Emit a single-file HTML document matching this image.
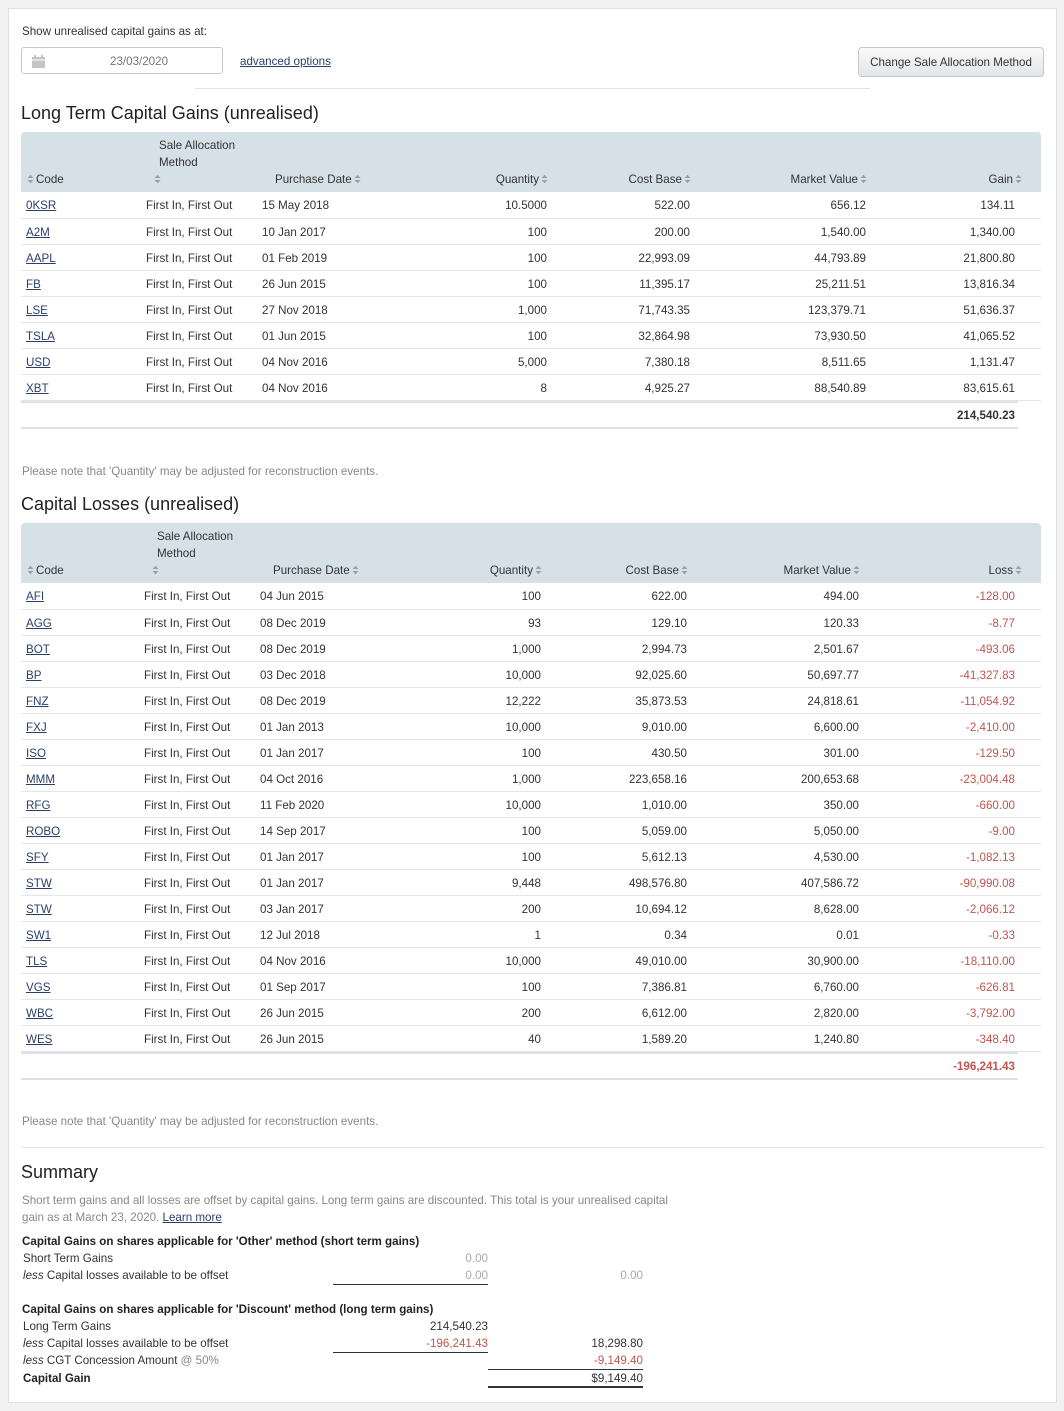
<!DOCTYPE html>
<html><head><meta charset="utf-8">
<style>
*{box-sizing:border-box;margin:0;padding:0}
body{width:1064px;height:1411px;background:#f2f2f3;font-family:"Liberation Sans",Arial,sans-serif;font-size:11.6px;color:#333;position:relative;overflow:hidden}
.panel{position:absolute;left:8px;top:8px;width:1049px;height:1395px;background:#fff;border:1px solid #e0e0e3}
.a{position:absolute;white-space:nowrap}
a{color:#2b3f6b;text-decoration:underline}
h2{font-weight:normal;font-size:18px;color:#222;position:absolute;left:21px}
.tw{position:absolute;left:21px;width:1020px}
table{border-collapse:collapse;table-layout:fixed;width:1020px}
th{background:#d6e0e7;font-weight:normal;color:#333;height:60px;vertical-align:bottom;padding:0 0 4px 0;line-height:17px;text-align:left}
th:first-child{border-top-left-radius:4px}
th:last-child{border-top-right-radius:4px}
td{height:26px;border-bottom:1px solid #e4e6ea;padding:2px 0 0 0;line-height:23px;white-space:nowrap}
.r{text-align:right}
.neg{color:#c0564e}
.s{display:inline-block;width:7px;height:10px;vertical-align:-1px;margin:0 2px}
.note{color:#888;position:absolute;left:22px}
</style></head><body>
<div class="panel"></div>
<svg width="0" height="0" style="position:absolute"><defs><symbol id="s" viewBox="0 0 7 10"><path d="M0.5 4L3.5 0.8L6.5 4Z M0.5 6L3.5 9.2L6.5 6Z" fill="#9aa0a8"/></symbol></defs></svg>

<div class="a" style="left:22px;top:25px">Show unrealised capital gains as at:</div>
<div class="a" style="left:21px;top:47px;width:202px;height:27px;border:1px solid #c9c9cc;border-radius:3px"></div>
<svg class="a" style="left:31px;top:54px" width="15" height="15" viewBox="0 0 15 15"><rect x="1" y="3" width="13" height="11" fill="#c2c4c9"/><rect x="3" y="1" width="2" height="3" fill="#c2c4c9"/><rect x="10" y="1" width="2" height="3" fill="#c2c4c9"/><rect x="1" y="5.5" width="13" height="1" fill="#fff"/></svg>
<div class="a" style="left:110px;top:55px;color:#777">23/03/2020</div>
<div class="a" style="left:240px;top:55px"><a>advanced options</a></div>
<div class="a" style="left:858px;top:47px;width:186px;height:30px;border:1px solid #c6c8cc;border-radius:4px;background:linear-gradient(#fafafa,#e4e5e8);text-align:center;line-height:29px;color:#333">Change Sale Allocation Method</div>
<div class="a" style="left:195px;top:88px;width:675px;border-top:1px solid #e2e2e5"></div>

<h2 style="top:103px">Long Term Capital Gains (unrealised)</h2>
<div class="tw" style="top:132px">
<table>
<colgroup><col style="width:120px"><col style="width:116px"><col style="width:143px"><col style="width:150px"><col style="width:143px"><col style="width:176px"><col style="width:172px"></colgroup>
<tr><th style="padding-left:4px"><svg class="s"><use href="#s"/></svg>Code</th><th style="padding-left:18px">Sale Allocation<br>Method<br><svg class="s" style="margin-left:-5px"><use href="#s"/></svg></th><th style="padding-left:18px">Purchase Date<svg class="s"><use href="#s"/></svg></th><th class="r" style="padding-right:0">Quantity<svg class="s"><use href="#s"/></svg></th><th class="r">Cost Base<svg class="s"><use href="#s"/></svg></th><th class="r">Market Value<svg class="s"><use href="#s"/></svg></th><th class="r" style="padding-right:17px">Gain<svg class="s"><use href="#s"/></svg></th></tr>
<tr><td style="padding-left:5px"><a>0KSR</a></td><td style="padding-left:5px">First In, First Out</td><td style="padding-left:5px">15 May 2018</td><td class="r" style="padding-right:3px">10.5000</td><td class="r" style="padding-right:3px">522.00</td><td class="r" style="padding-right:3px">656.12</td><td class="r" style="padding-right:26px">134.11</td></tr>
<tr><td style="padding-left:5px"><a>A2M</a></td><td style="padding-left:5px">First In, First Out</td><td style="padding-left:5px">10 Jan 2017</td><td class="r" style="padding-right:3px">100</td><td class="r" style="padding-right:3px">200.00</td><td class="r" style="padding-right:3px">1,540.00</td><td class="r" style="padding-right:26px">1,340.00</td></tr>
<tr><td style="padding-left:5px"><a>AAPL</a></td><td style="padding-left:5px">First In, First Out</td><td style="padding-left:5px">01 Feb 2019</td><td class="r" style="padding-right:3px">100</td><td class="r" style="padding-right:3px">22,993.09</td><td class="r" style="padding-right:3px">44,793.89</td><td class="r" style="padding-right:26px">21,800.80</td></tr>
<tr><td style="padding-left:5px"><a>FB</a></td><td style="padding-left:5px">First In, First Out</td><td style="padding-left:5px">26 Jun 2015</td><td class="r" style="padding-right:3px">100</td><td class="r" style="padding-right:3px">11,395.17</td><td class="r" style="padding-right:3px">25,211.51</td><td class="r" style="padding-right:26px">13,816.34</td></tr>
<tr><td style="padding-left:5px"><a>LSE</a></td><td style="padding-left:5px">First In, First Out</td><td style="padding-left:5px">27 Nov 2018</td><td class="r" style="padding-right:3px">1,000</td><td class="r" style="padding-right:3px">71,743.35</td><td class="r" style="padding-right:3px">123,379.71</td><td class="r" style="padding-right:26px">51,636.37</td></tr>
<tr><td style="padding-left:5px"><a>TSLA</a></td><td style="padding-left:5px">First In, First Out</td><td style="padding-left:5px">01 Jun 2015</td><td class="r" style="padding-right:3px">100</td><td class="r" style="padding-right:3px">32,864.98</td><td class="r" style="padding-right:3px">73,930.50</td><td class="r" style="padding-right:26px">41,065.52</td></tr>
<tr><td style="padding-left:5px"><a>USD</a></td><td style="padding-left:5px">First In, First Out</td><td style="padding-left:5px">04 Nov 2016</td><td class="r" style="padding-right:3px">5,000</td><td class="r" style="padding-right:3px">7,380.18</td><td class="r" style="padding-right:3px">8,511.65</td><td class="r" style="padding-right:26px">1,131.47</td></tr>
<tr><td style="padding-left:5px"><a>XBT</a></td><td style="padding-left:5px">First In, First Out</td><td style="padding-left:5px">04 Nov 2016</td><td class="r" style="padding-right:3px">8</td><td class="r" style="padding-right:3px">4,925.27</td><td class="r" style="padding-right:3px">88,540.89</td><td class="r" style="padding-right:26px">83,615.61</td></tr>
</table>
<div style="width:997px;border-top:2px solid #dfe1e5;border-bottom:2px solid #dfe1e5;height:28px;text-align:right;padding-right:3px;line-height:25px;font-weight:bold">214,540.23</div>
</div>
<div class="note" style="top:465px">Please note that 'Quantity' may be adjusted for reconstruction events.</div>

<h2 style="top:494px">Capital Losses (unrealised)</h2>
<div class="tw" style="top:523px">
<table>
<colgroup><col style="width:118px"><col style="width:116px"><col style="width:145px"><col style="width:144px"><col style="width:146px"><col style="width:172px"><col style="width:179px"></colgroup>
<tr><th style="padding-left:4px"><svg class="s"><use href="#s"/></svg>Code</th><th style="padding-left:18px">Sale Allocation<br>Method<br><svg class="s" style="margin-left:-5px"><use href="#s"/></svg></th><th style="padding-left:18px">Purchase Date<svg class="s"><use href="#s"/></svg></th><th class="r" style="padding-right:0">Quantity<svg class="s"><use href="#s"/></svg></th><th class="r">Cost Base<svg class="s"><use href="#s"/></svg></th><th class="r">Market Value<svg class="s"><use href="#s"/></svg></th><th class="r" style="padding-right:17px">Loss<svg class="s"><use href="#s"/></svg></th></tr>
<tr><td style="padding-left:5px"><a>AFI</a></td><td style="padding-left:5px">First In, First Out</td><td style="padding-left:5px">04 Jun 2015</td><td class="r" style="padding-right:3px">100</td><td class="r" style="padding-right:3px">622.00</td><td class="r" style="padding-right:3px">494.00</td><td class="r neg" style="padding-right:26px">-128.00</td></tr>
<tr><td style="padding-left:5px"><a>AGG</a></td><td style="padding-left:5px">First In, First Out</td><td style="padding-left:5px">08 Dec 2019</td><td class="r" style="padding-right:3px">93</td><td class="r" style="padding-right:3px">129.10</td><td class="r" style="padding-right:3px">120.33</td><td class="r neg" style="padding-right:26px">-8.77</td></tr>
<tr><td style="padding-left:5px"><a>BOT</a></td><td style="padding-left:5px">First In, First Out</td><td style="padding-left:5px">08 Dec 2019</td><td class="r" style="padding-right:3px">1,000</td><td class="r" style="padding-right:3px">2,994.73</td><td class="r" style="padding-right:3px">2,501.67</td><td class="r neg" style="padding-right:26px">-493.06</td></tr>
<tr><td style="padding-left:5px"><a>BP</a></td><td style="padding-left:5px">First In, First Out</td><td style="padding-left:5px">03 Dec 2018</td><td class="r" style="padding-right:3px">10,000</td><td class="r" style="padding-right:3px">92,025.60</td><td class="r" style="padding-right:3px">50,697.77</td><td class="r neg" style="padding-right:26px">-41,327.83</td></tr>
<tr><td style="padding-left:5px"><a>FNZ</a></td><td style="padding-left:5px">First In, First Out</td><td style="padding-left:5px">08 Dec 2019</td><td class="r" style="padding-right:3px">12,222</td><td class="r" style="padding-right:3px">35,873.53</td><td class="r" style="padding-right:3px">24,818.61</td><td class="r neg" style="padding-right:26px">-11,054.92</td></tr>
<tr><td style="padding-left:5px"><a>FXJ</a></td><td style="padding-left:5px">First In, First Out</td><td style="padding-left:5px">01 Jan 2013</td><td class="r" style="padding-right:3px">10,000</td><td class="r" style="padding-right:3px">9,010.00</td><td class="r" style="padding-right:3px">6,600.00</td><td class="r neg" style="padding-right:26px">-2,410.00</td></tr>
<tr><td style="padding-left:5px"><a>ISO</a></td><td style="padding-left:5px">First In, First Out</td><td style="padding-left:5px">01 Jan 2017</td><td class="r" style="padding-right:3px">100</td><td class="r" style="padding-right:3px">430.50</td><td class="r" style="padding-right:3px">301.00</td><td class="r neg" style="padding-right:26px">-129.50</td></tr>
<tr><td style="padding-left:5px"><a>MMM</a></td><td style="padding-left:5px">First In, First Out</td><td style="padding-left:5px">04 Oct 2016</td><td class="r" style="padding-right:3px">1,000</td><td class="r" style="padding-right:3px">223,658.16</td><td class="r" style="padding-right:3px">200,653.68</td><td class="r neg" style="padding-right:26px">-23,004.48</td></tr>
<tr><td style="padding-left:5px"><a>RFG</a></td><td style="padding-left:5px">First In, First Out</td><td style="padding-left:5px">11 Feb 2020</td><td class="r" style="padding-right:3px">10,000</td><td class="r" style="padding-right:3px">1,010.00</td><td class="r" style="padding-right:3px">350.00</td><td class="r neg" style="padding-right:26px">-660.00</td></tr>
<tr><td style="padding-left:5px"><a>ROBO</a></td><td style="padding-left:5px">First In, First Out</td><td style="padding-left:5px">14 Sep 2017</td><td class="r" style="padding-right:3px">100</td><td class="r" style="padding-right:3px">5,059.00</td><td class="r" style="padding-right:3px">5,050.00</td><td class="r neg" style="padding-right:26px">-9.00</td></tr>
<tr><td style="padding-left:5px"><a>SFY</a></td><td style="padding-left:5px">First In, First Out</td><td style="padding-left:5px">01 Jan 2017</td><td class="r" style="padding-right:3px">100</td><td class="r" style="padding-right:3px">5,612.13</td><td class="r" style="padding-right:3px">4,530.00</td><td class="r neg" style="padding-right:26px">-1,082.13</td></tr>
<tr><td style="padding-left:5px"><a>STW</a></td><td style="padding-left:5px">First In, First Out</td><td style="padding-left:5px">01 Jan 2017</td><td class="r" style="padding-right:3px">9,448</td><td class="r" style="padding-right:3px">498,576.80</td><td class="r" style="padding-right:3px">407,586.72</td><td class="r neg" style="padding-right:26px">-90,990.08</td></tr>
<tr><td style="padding-left:5px"><a>STW</a></td><td style="padding-left:5px">First In, First Out</td><td style="padding-left:5px">03 Jan 2017</td><td class="r" style="padding-right:3px">200</td><td class="r" style="padding-right:3px">10,694.12</td><td class="r" style="padding-right:3px">8,628.00</td><td class="r neg" style="padding-right:26px">-2,066.12</td></tr>
<tr><td style="padding-left:5px"><a>SW1</a></td><td style="padding-left:5px">First In, First Out</td><td style="padding-left:5px">12 Jul 2018</td><td class="r" style="padding-right:3px">1</td><td class="r" style="padding-right:3px">0.34</td><td class="r" style="padding-right:3px">0.01</td><td class="r neg" style="padding-right:26px">-0.33</td></tr>
<tr><td style="padding-left:5px"><a>TLS</a></td><td style="padding-left:5px">First In, First Out</td><td style="padding-left:5px">04 Nov 2016</td><td class="r" style="padding-right:3px">10,000</td><td class="r" style="padding-right:3px">49,010.00</td><td class="r" style="padding-right:3px">30,900.00</td><td class="r neg" style="padding-right:26px">-18,110.00</td></tr>
<tr><td style="padding-left:5px"><a>VGS</a></td><td style="padding-left:5px">First In, First Out</td><td style="padding-left:5px">01 Sep 2017</td><td class="r" style="padding-right:3px">100</td><td class="r" style="padding-right:3px">7,386.81</td><td class="r" style="padding-right:3px">6,760.00</td><td class="r neg" style="padding-right:26px">-626.81</td></tr>
<tr><td style="padding-left:5px"><a>WBC</a></td><td style="padding-left:5px">First In, First Out</td><td style="padding-left:5px">26 Jun 2015</td><td class="r" style="padding-right:3px">200</td><td class="r" style="padding-right:3px">6,612.00</td><td class="r" style="padding-right:3px">2,820.00</td><td class="r neg" style="padding-right:26px">-3,792.00</td></tr>
<tr><td style="padding-left:5px"><a>WES</a></td><td style="padding-left:5px">First In, First Out</td><td style="padding-left:5px">26 Jun 2015</td><td class="r" style="padding-right:3px">40</td><td class="r" style="padding-right:3px">1,589.20</td><td class="r" style="padding-right:3px">1,240.80</td><td class="r neg" style="padding-right:26px">-348.40</td></tr>
</table>
<div class="neg" style="width:997px;border-top:2px solid #dfe1e5;border-bottom:2px solid #dfe1e5;height:28px;text-align:right;padding-right:3px;line-height:25px;font-weight:bold">-196,241.43</div>
</div>
<div class="note" style="top:1115px">Please note that 'Quantity' may be adjusted for reconstruction events.</div>
<div class="a" style="left:21px;top:1147px;width:1023px;border-top:1px solid #e2e2e5"></div>

<h2 style="top:1162px">Summary</h2>
<div class="a" style="left:22px;top:1192px;color:#888;line-height:17px">Short term gains and all losses are offset by capital gains. Long term gains are discounted. This total is your unrealised capital<br>gain as at March 23, 2020. <a style="color:#2b3f6b">Learn more</a></div>

<div class="a" style="left:22px;top:1235px;font-weight:600;color:#222">Capital Gains on shares applicable for 'Other' method (short term gains)</div>
<div class="a" style="left:23px;top:1252px">Short Term Gains</div>
<div class="a" style="left:23px;top:1269px"><i>less</i> Capital losses available to be offset</div>
<div class="a" style="left:333px;width:155px;top:1252px;text-align:right;color:#aaa">0.00</div>
<div class="a" style="left:333px;width:155px;top:1269px;text-align:right;color:#aaa;height:16px;border-bottom:1px solid #333">0.00</div>
<div class="a" style="left:488px;width:155px;top:1269px;text-align:right;color:#aaa">0.00</div>

<div class="a" style="left:22px;top:1303px;font-weight:600;color:#222">Capital Gains on shares applicable for 'Discount' method (long term gains)</div>
<div class="a" style="left:23px;top:1320px">Long Term Gains</div>
<div class="a" style="left:23px;top:1337px"><i>less</i> Capital losses available to be offset</div>
<div class="a" style="left:23px;top:1354px"><i>less</i> CGT Concession Amount <span style="color:#888">@ 50%</span></div>
<div class="a" style="left:23px;top:1372px;font-weight:600;color:#222">Capital Gain</div>
<div class="a" style="left:333px;width:155px;top:1320px;text-align:right">214,540.23</div>
<div class="a neg" style="left:333px;width:155px;top:1337px;text-align:right;height:16px;border-bottom:1px solid #333">-196,241.43</div>
<div class="a" style="left:488px;width:155px;top:1337px;text-align:right">18,298.80</div>
<div class="a neg" style="left:488px;width:155px;top:1354px;text-align:right;height:16px;border-bottom:1px solid #333">-9,149.40</div>
<div class="a" style="left:488px;width:155px;top:1372px;text-align:right;height:16px;border-bottom:2px solid #333">$9,149.40</div>
</body></html>
